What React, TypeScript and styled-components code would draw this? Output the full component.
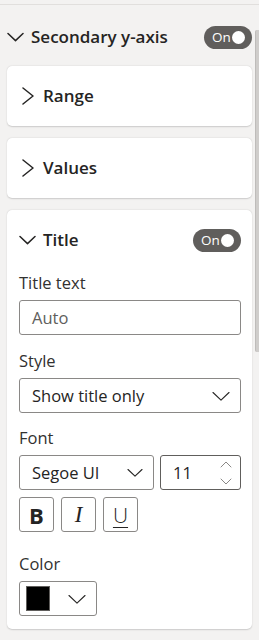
import styled, { createGlobalStyle } from 'styled-components';

const Global = createGlobalStyle`
  html, body { margin: 0; padding: 0; background: #f3f2f1; }
  body { font-family: "Open Sans", "Noto Sans", sans-serif; color: #252423; }
  * { box-sizing: border-box; }
`;

const Pane = styled.div`
  width: 259px;
  height: 636px;
  margin-top: 4px;
  display: flex;
  border-top: 1px solid #e1dfdd;
  overflow: hidden;
`;

const Content = styled.div`
  flex: 1;
  padding: 0 3px 0 7px;
  display: flex;
  flex-direction: column;
  gap: 12px;
`;

const Scrollbar = styled.div`
  width: 4px;
  align-self: flex-start;
  margin-top: 25px;
  height: 322px;
  background: #cfcdcb;
  border-left: 1px solid #bebcba;
  border-radius: 2px 0 0 2px;
`;

const GroupHeader = styled.div`
  height: 49px;
  padding-top: 15px;
  display: flex;
  align-items: center;
  font-size: 17px;
  font-weight: 600;
  line-height: 22px;
`;

const Card = styled.div`
  background: #fff;
  border-radius: 5px;
  box-shadow: 0 0.5px 1.5px rgba(0, 0, 0, 0.16), 0 0 1px rgba(0, 0, 0, 0.06);
`;

const CardHeader = styled.div<{ left: number }>`
  height: 60px;
  display: flex;
  align-items: center;
  padding: 0 11px 0 ${(p) => p.left}px;
  font-size: 17px;
  font-weight: 600;
  line-height: 22px;
`;

const HeaderText = styled.span<{ gap: number }>`
  flex: 1;
  margin-left: ${(p) => p.gap}px;
  white-space: nowrap;
`;

const Toggle = styled.div`
  width: 48px;
  height: 23px;
  border-radius: 12px;
  background: #605e5c;
  color: #fff;
  display: flex;
  align-items: center;
  padding: 0 7px 0 8px;
  font-size: 13.5px;
  font-weight: 500;
  line-height: 23px;
  &::after {
    content: '';
    width: 13px;
    height: 13px;
    border-radius: 50%;
    background: #fff;
    margin-left: auto;
  }
`;

const Body = styled.div`
  padding: 2px 11px 13px 12px;
  display: flex;
  flex-direction: column;
`;

const Label = styled.div<{ top?: number }>`
  font-size: 16.5px;
  color: #323130;
  line-height: 22px;
  margin: ${(p) => (p.top ?? 15)}px 0 6px;
`;

const Field = styled.div<{ w?: number; dark?: boolean }>`
  height: 35px;
  width: ${(p) => (p.w ? `${p.w}px` : 'auto')};
  flex: ${(p) => (p.w ? 'none' : '1 0 auto')};
  border: 1px solid ${(p) => (p.dark ? '#605e5c' : '#8a8886')};
  border-radius: 3px;
  display: flex;
  align-items: center;
  padding: 0 10px 0 12px;
  font-size: 16.5px;
  color: #252423;
  justify-content: space-between;
`;

const Placeholder = styled.span`
  color: #605e5c;
`;

const Row = styled.div`
  display: flex;
  gap: 6px;
`;

const FmtRow = styled.div`
  display: flex;
  gap: 7px;
  margin-top: 7px;
`;

const FmtButton = styled.div<{ bold?: boolean; italic?: boolean; under?: boolean }>`
  width: 35px;
  height: 35px;
  border: 1px solid #8a8886;
  border-radius: 3px;
  display: flex;
  align-items: center;
  justify-content: center;
  font-size: ${(p) => (p.bold ? 22 : p.italic ? 23 : 21)}px;
  color: #252423;
  font-weight: ${(p) => (p.bold ? 700 : 300)};
  font-style: ${(p) => (p.italic ? 'italic' : 'normal')};
  text-decoration: ${(p) => (p.under ? 'underline' : 'none')};
  text-underline-offset: 4px;
  text-decoration-thickness: 1px;
  font-family: ${(p) => (p.italic ? '"Liberation Serif", serif' : 'inherit')};
`;

const Swatch = styled.div`
  width: 24px;
  height: 25px;
  background: #000;
  border: 1px solid #605e5c;
  margin-left: -6px;
`;

const Spinner = styled.div`
  display: flex;
  flex-direction: column;
  gap: 10px;
  margin-right: -2px;
`;

const ChevronDown = ({ w = 17, sw = 1.5 }: { w?: number; sw?: number }) => (
  <svg width={w} height={10} viewBox={`0 0 ${w} 10`} fill="none">
    <path d={`M1 1.5L${w / 2} ${1.5 + ((w - 2) / 2) * 0.95}L${w - 1} 1.5`} stroke="#252423" strokeWidth={sw} strokeLinecap="round" strokeLinejoin="round" />
  </svg>
);

const ChevronRight = () => (
  <svg width="12" height="18" viewBox="0 0 12 18" fill="none">
    <path d="M1 1L11 9L1 17" stroke="#252423" strokeWidth="1.5" strokeLinecap="round" strokeLinejoin="round" />
  </svg>
);

const SmallArrow = ({ up }: { up?: boolean }) => (
  <svg width="12" height="7" viewBox="0 0 12 7" fill="none">
    <path d={up ? 'M1 6l5-5 5 5' : 'M1 1l5 5 5-5'} stroke="#8a8886" strokeWidth="1" strokeLinecap="round" />
  </svg>
);

export default function App() {
  return (
    <>
      <Global />
      <Pane>
        <Content>
          <GroupHeader>
            <ChevronDown w={17} />
            <HeaderText gap={7}>Secondary y-axis</HeaderText>
            <Toggle>On</Toggle>
          </GroupHeader>
          <Card>
            <CardHeader left={15}>
              <ChevronRight />
              <HeaderText gap={9}>Range</HeaderText>
            </CardHeader>
          </Card>
          <Card>
            <CardHeader left={15}>
              <ChevronRight />
              <HeaderText gap={9}>Values</HeaderText>
            </CardHeader>
          </Card>
          <Card>
            <CardHeader left={12}>
              <ChevronDown w={17} />
              <HeaderText gap={7}>Title</HeaderText>
              <Toggle>On</Toggle>
            </CardHeader>
            <Body>
              <Label top={0}>Title text</Label>
              <Field>
                <Placeholder>Auto</Placeholder>
              </Field>
              <Label>Style</Label>
              <Field>
                Show title only
                <ChevronDown w={18} sw={1.1} />
              </Field>
              <Label top={14}>Font</Label>
              <Row>
                <Field w={135}>
                  Segoe UI
                  <ChevronDown w={16} sw={1.1} />
                </Field>
                <Field dark>
                  11
                  <Spinner>
                    <SmallArrow up />
                    <SmallArrow />
                  </Spinner>
                </Field>
              </Row>
              <FmtRow>
                <FmtButton bold>B</FmtButton>
                <FmtButton italic>I</FmtButton>
                <FmtButton under>U</FmtButton>
              </FmtRow>
              <Label top={21}>Color</Label>
              <Field w={78}>
                <Swatch />
                <ChevronDown w={18} sw={1.1} />
              </Field>
            </Body>
          </Card>
        </Content>
        <Scrollbar />
      </Pane>
    </>
  );
}
